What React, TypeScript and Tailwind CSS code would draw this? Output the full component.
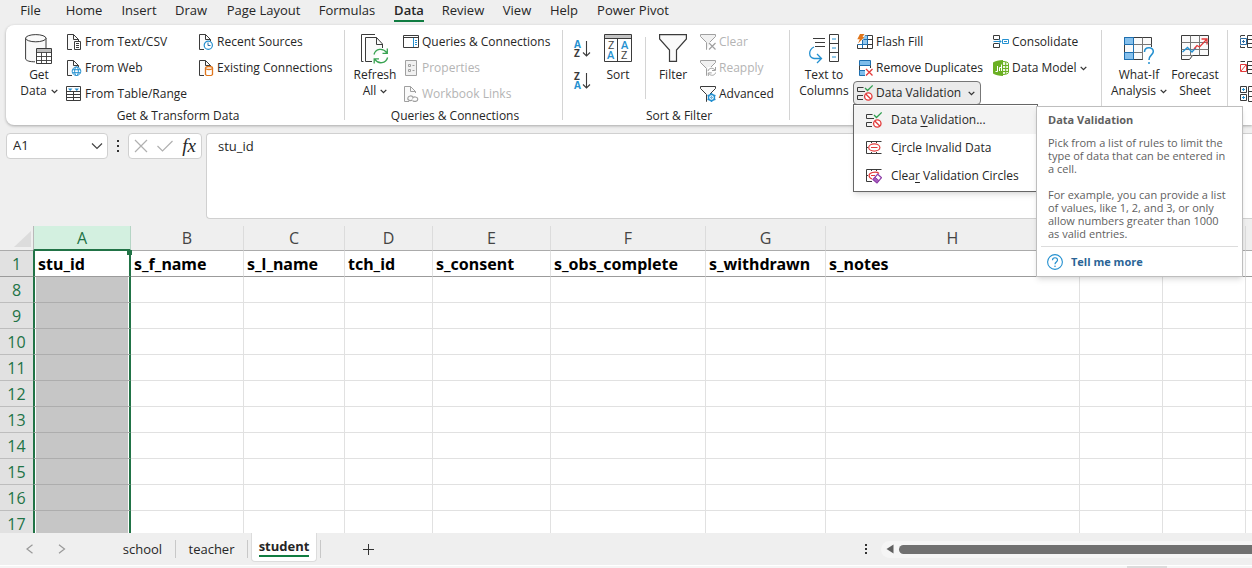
import type { ReactNode } from "react";

const tabs = [
  ["File", "w-[39px]"],
  ["Home", "w-[68px]"],
  ["Insert", "w-[42px]"],
  ["Draw", "w-[62px]"],
  ["Page Layout", "w-[83px]"],
  ["Formulas", "w-[84px]"],
  ["Data", "w-[40px]"],
  ["Review", "w-[68px]"],
  ["View", "w-[40px]"],
  ["Help", "w-[54px]"],
  ["Power Pivot", "w-[84px]"],
];

const columns = [
  ["A", "stu_id", "w-[98px]"],
  ["B", "s_f_name", "w-[113px]"],
  ["C", "s_l_name", "w-[101px]"],
  ["D", "tch_id", "w-[88px]"],
  ["E", "s_consent", "w-[118px]"],
  ["F", "s_obs_complete", "w-[155px]"],
  ["G", "s_withdrawn", "w-[120px]"],
  ["H", "s_notes", "w-[254px]"],
  ["I", "", "w-[83px]"],
  ["J", "", "w-[83px]"],
  ["K", "", "w-[83px]"],
];

const rows = [8, 9, 10, 11, 12, 13, 14, 15, 16, 17];

/* ---------- icons ---------- */

function Svg({ w = 16, h = 16, children }: { w?: number; h?: number; children: ReactNode }) {
  return (
    <svg width={w} height={h} viewBox={`0 0 ${w} ${h}`} fill="none" stroke="#3b3b3b" className="shrink-0" aria-hidden="true">
      {children}
    </svg>
  );
}

function Chevron() {
  return (
    <svg width="7" height="5" viewBox="0 0 7 5" fill="none" stroke="#333" strokeWidth="1.3" className="inline-block shrink-0" aria-hidden="true">
      <path d="M.7 .9L3.5 3.7L6.3 .9" />
    </svg>
  );
}

function Doc({ children, stroke = "#3b3b3b" }: { children: ReactNode; stroke?: string }) {
  return (
    <Svg>
      <path d="M6 15.5H1.5V.5H7.5L12.5 5.5V7" stroke={stroke} fill="#fafafa" />
      <path d="M7.5 .5V5.5H12.5" stroke={stroke} />
      {children}
    </Svg>
  );
}

const TextDocIcon = () => (
  <Doc>
    <path d="M8.5 7.5H14.5V15.5H8.5Z" fill="#fff" />
    <path d="M10 9.5H13M10 11.5H13M10 13.5H13" />
  </Doc>
);

const WebDocIcon = () => (
  <Doc>
    <circle cx="10.5" cy="11.2" r="4.3" stroke="#2490d0" fill="#fff" />
    <ellipse cx="10.5" cy="11.2" rx="1.9" ry="4.3" stroke="#2490d0" />
    <path d="M6.5 9.7H14.5M6.5 12.7H14.5" stroke="#2490d0" />
  </Doc>
);

const RecentIcon = () => (
  <Doc>
    <circle cx="10.3" cy="11.3" r="4.1" stroke="#2490d0" strokeWidth="1.2" fill="#fff" />
    <path d="M10 8.5V11.5H12.5" stroke="#2b6ca3" />
  </Doc>
);

const ConnectionIcon = () => (
  <Doc>
    <path d="M7.5 8V14.5C8.5 16 13.5 16 14.5 14.5V8" stroke="#e0761c" strokeWidth="1.3" fill="#fff" />
    <ellipse cx="11" cy="8" rx="3.5" ry="1.5" stroke="#e0761c" strokeWidth="1.3" fill="#fff" />
  </Doc>
);

const TableIcon = () => (
  <Svg>
    <path d="M.5 .5H14.5V14.5H.5Z" fill="#fff" />
    <path d="M.5 5.5H14.5M.5 8.5H14.5M.5 11.5H14.5M7.5 5V14.5" />
    <path d="M2 2.5H6.5L4.2 5ZM8.5 2.5H13L10.8 5Z" fill="#2490d0" stroke="none" />
  </Svg>
);

const DatabaseIcon = () => (
  <Svg w={28} h={30}>
    <path d="M1 5H20.5V14H10.5V27C5 27.5 1.5 26 1 25Z" fill="#fafafa" stroke="none" />
    <path d="M.6 4V25C1.5 27 5 27.8 10 27.8M21 4V14" />
    <ellipse cx="10.8" cy="4.2" rx="10.2" ry="3.6" fill="#fafafa" />
    <path d="M11.5 14.5H26.5V29.5H11.5Z" fill="#fff" />
    <path d="M12 15H26V18H12Z" fill="#bdbdbd" stroke="none" />
    <path d="M11.5 18.5H26.5M11.5 22.5H26.5M11.5 26.5H26.5M16.5 18.5V29.5M21.5 18.5V29.5" strokeWidth=".9" />
  </Svg>
);

const RefreshIcon = () => (
  <Svg w={28} h={30}>
    <path d="M14 .5H.5V27.5H2.5" />
    <path d="M11 27.5H4.5V3.5H15.5L21.5 10V14" fill="#fafafa" />
    <path d="M15.5 3.5V10.5H21.5" />
    <g stroke="#39a352" strokeWidth="1.3">
      <path d="M13 20.5C14.5 14.5 22 13.5 25.7 18.7M26.3 14.5V19.3H21.5" />
      <path d="M26.6 23.5C25 29.5 17.5 30.6 13.8 25.4M13.2 29.6V24.8H18" />
    </g>
  </Svg>
);

const PaneIcon = () => (
  <Svg>
    <path d="M.5 1.5H15.5V13.5H.5Z" fill="#fff" />
    <path d="M.5 3.5H15.5" />
    <path d="M10.5 4V13" stroke="#2490d0" />
    <path d="M12 6.5H14M12 8.5H14M12 10.5H14" stroke="#2490d0" />
  </Svg>
);

const PropertiesIcon = () => (
  <Svg>
    <path d="M2.5 .5H13.5V15.5H2.5Z" stroke="#a0a0a0" fill="#f1f1f1" />
    <path d="M5.5 4.5H7.5V6.5H5.5ZM5.5 9.5H7.5V11.5H5.5ZM9.5 5.5H11.5M9.5 10.5H11.5" stroke="#a0a0a0" />
  </Svg>
);

const LinksIcon = () => (
  <Doc stroke="#a0a0a0">
    <g stroke="#a0a0a0" strokeWidth="1.2">
      <path d="M9.5 13.7C7.5 15.5 4.2 14.2 4.8 11.9C5.3 9.7 9 9.2 10 11.2" />
      <path d="M9.4 12.4C10.4 10.2 14.6 10.6 14.8 13C14.8 15.8 11 16 9.8 14.6" />
    </g>
  </Doc>
);

function SortIcon({ top, bottom, topColor, bottomColor }: { top: string; bottom: string; topColor: string; bottomColor: string }) {
  return (
    <svg width="18" height="20" viewBox="0 0 18 20" fill="none" className="overflow-visible" aria-hidden="true">
      <g fontFamily="Open Sans, sans-serif" fontSize="10" fontWeight="700">
        <text x="1" y="9" fill={topColor}>{top}</text>
        <text x="1" y="18" fill={bottomColor}>{bottom}</text>
      </g>
      <path d="M13.5 2V17M10 13.5L13.5 17L17 13.5" stroke="#3b3b3b" strokeWidth="1.1" />
    </svg>
  );
}

const SortDialogIcon = () => (
  <Svg w={28} h={30}>
    <path d="M.5 .5H27.5V27.5H.5Z" fill="#fff" />
    <path d="M1 1H27V4H1Z" fill="#c4c4c4" stroke="none" />
    <path d="M.5 4.5H27.5M13.5 4.5V27.5" />
    <g fontFamily="Open Sans, sans-serif" fontSize="11" stroke="none">
      <text x="4" y="15" fill="#444">Z</text>
      <text x="3" y="25" fill="#2490d0" fontWeight="600">A</text>
      <text x="17" y="15" fill="#2490d0" fontWeight="600">A</text>
      <text x="17" y="25" fill="#444">Z</text>
    </g>
  </Svg>
);

const FilterIcon = () => (
  <Svg w={28} h={30}>
    <path d="M.6 .6H27.4V5L17.5 16V27.4H10.5V16L.6 5Z" fill="#fafafa" strokeWidth="1.2" />
  </Svg>
);

function SmallFilter({ stroke = "#a0a0a0", fill = "#f1f1f1", children }: { stroke?: string; fill?: string; children: ReactNode }) {
  return (
    <Svg>
      <path d="M7 15.5H6.5V8.5L.5 2.5V.5H15.5V2.5L10 8" stroke={stroke} fill={fill} />
      {children}
    </Svg>
  );
}

const ClearIcon = () => (
  <SmallFilter>
    <path d="M9 9L15.5 15.5M15.5 9L9 15.5" stroke="#a0a0a0" strokeWidth="1.2" />
  </SmallFilter>
);

const ReapplyIcon = () => (
  <SmallFilter>
    <path d="M7.5 7H16V16H7.5Z" fill="#fff" stroke="none" />
    <path d="M8 11C9 7.5 13 7.5 15 10M15.5 7V10.5H12M15.7 12.5C14.7 16 10.5 16 8.7 13.5M8.3 16.3V12.9H11.7" stroke="#a0a0a0" />
  </SmallFilter>
);

const AdvancedIcon = () => (
  <SmallFilter stroke="#3b3b3b" fill="#fafafa">
    <circle cx="11.5" cy="11.5" r="3" stroke="#2490d0" strokeWidth="1.4" fill="#fff" />
    <circle cx="11.5" cy="11.5" r=".8" stroke="#2490d0" />
    <path d="M11.5 7V8.5M11.5 14.5V16M7.6 9.2L9 10M14 13L15.4 13.8M7.6 13.8L9 13M14 10L15.4 9.2" stroke="#2490d0" strokeWidth="1.6" />
  </SmallFilter>
);

const TextColumnsIcon = () => (
  <Svg w={30} h={30}>
    <path d="M4 4.5H16M6 8.5H16M6 12.5H16" />
    <path d="M20.5 .5H29.5V27.5H20.5ZM20.5 9.5H29.5M20.5 18.5H29.5" fill="#fff" />
    <path d="M23 5H27M23 14H27M23 23H27" stroke="#2490d0" />
    <path d="M5 13C-1 16 -.5 23.5 5 24.5H12.5M8 20L12.5 24.5L8 29" stroke="#2490d0" strokeWidth="1.3" />
  </Svg>
);

const FlashFillIcon = () => (
  <Svg>
    <path d="M8 1.5H15.5V14.5H.5V10.5" fill="#fff" />
    <path d="M10.5 1.5V14.5M5.5 10V14.5M5 10.5H15.5M8 5.5H15.5" />
    <path d="M7.5 1.5H10.5V10.5H5.5V5Z" fill="#93c8ee" stroke="none" />
    <path d="M10.5 1.5V10.5H.5M5.5 14V6M6.5 5.5H10.5" stroke="#1d6fb0" />
    <path d="M3 0H7.5L5.5 3H7.5L1 9.5L2.8 5.2H.3Z" fill="#e0761c" stroke="none" />
  </Svg>
);

const RemoveDuplicatesIcon = () => (
  <Svg>
    <path d="M2.5 .5H13.5V5.5H2.5Z" fill="#7fbdeb" stroke="#1d6fb0" />
    <path d="M2.5 5.5V10.5H8M13.5 5.5V8" stroke="#3b3b3b" />
    <path d="M8 10.5H2.5V15.5H8" fill="#7fbdeb" stroke="#1d6fb0" />
    <path d="M9 9L15.5 15.5M15.5 9L9 15.5" stroke="#e33b3b" strokeWidth="1.3" />
  </Svg>
);

const ValidationIcon = () => (
  <Svg>
    <path d="M6.5 2.5H.5V6.5H8M6 10.5H.5V14.5H6" />
    <path d="M8 3L10.5 5.5L15.7 .5" stroke="#2f9e4f" strokeWidth="1.3" />
    <circle cx="11.3" cy="11.5" r="3.7" stroke="#e33b3b" strokeWidth="1.3" fill="#fff" />
    <path d="M8.8 9L13.8 14" stroke="#e33b3b" strokeWidth="1.3" />
  </Svg>
);

const CircleInvalidIcon = () => (
  <Svg>
    <path d="M15.5 1.5H.5V13.5H15.5M5.5 1.5V3M10.5 1.5V3M5.5 12V13.5M10.5 12V13.5M.5 7.5H2" />
    <ellipse cx="8.3" cy="7.5" rx="5.6" ry="3.6" stroke="#e33b3b" strokeWidth="1.2" fill="#fff" />
    <path d="M5 7.5H11.5" stroke="#e33b3b" />
  </Svg>
);

const ClearCirclesIcon = () => (
  <Svg>
    <path d="M15.5 1.5H.5V13.5H6M5.5 1.5V3M10.5 1.5V3M.5 7.5H2" />
    <path d="M6 11C2 9.5 2 5.5 6.5 4.5C9 4 12 4.5 13 5.5M5 7.5H9" stroke="#e33b3b" strokeWidth="1.2" />
    <path d="M11.7 6.2L15.5 9.7L11 15L7 11.5Z" fill="#fff" stroke="#8f3fa8" strokeWidth="1.2" />
    <path d="M9 9.2L13 12.7L11 15L7 11.5Z" fill="#a55bbd" stroke="#8f3fa8" />
  </Svg>
);

const ConsolidateIcon = () => (
  <Svg>
    <path d="M.5 5V1.5H6.5V5.5H.5M.5 10V13.5H6.5V9.5H.5" />
    <path d="M.5 7.5H8M5.5 5L8 7.5L5.5 10" stroke="#2490d0" />
    <path d="M9.5 5.5H15.5V9.5H9.5ZM11 7.5H14" stroke="#2490d0" />
  </Svg>
);

const DataModelIcon = () => (
  <Svg>
    <path d="M0 2.5C2 1.2 6 .3 10 0V16C6 15.8 2 14.8 0 13.5Z" fill="#6bb023" stroke="none" />
    <path d="M10 1.5C13 1.5 15.5 2.5 15.5 3.5V12.5C15.5 13.5 13 14.5 10 14.5" stroke="#6bb023" fill="#eef7e2" />
    <path d="M12.7 2V14M10 5.5H15M10 8.5H15M10 11.5H15" stroke="#6bb023" />
    <path d="M2.5 11.5H4.5V6M6.5 11V7.5H8.5M8.5 4.5V11" stroke="#fff" />
  </Svg>
);

const WhatIfIcon = () => (
  <Svg w={30} h={30}>
    <path d="M.5 3.5H27.5V25.5H.5Z" fill="#fafafa" />
    <path d="M.5 10.5H27.5M.5 18.5H27.5M18.5 3.5V25.5" stroke="#777" />
    <path d="M.5 3.5H9.5V10.5H.5ZM.5 18.5H9.5V25.5H.5Z" fill="#86c0ec" stroke="#1d6fb0" />
    <path d="M9.5 10.5V18.5" stroke="#1d6fb0" />
    <path d="M19 13H30V30H19Z" fill="#fff" stroke="none" />
    <path d="M20.5 18C20.5 12.5 29.3 12.5 29.3 17.5C29.3 21 25 21 25 26" stroke="#2490d0" strokeWidth="1.5" />
    <circle cx="25" cy="29" r="1" fill="#2490d0" stroke="none" />
  </Svg>
);

const ForecastIcon = () => (
  <Svg w={28} h={30}>
    <path d="M.5 1.5H27.5V21.5H11.5L8.5 25.5H.5Z" fill="#fafafa" />
    <path d="M.5 8.5H27.5M.5 15.5H27.5M9.5 1.5V21.5M18.5 1.5V21.5M.5 21.5H11.5" stroke="#777" />
    <path d="M1.5 18L6.5 13.5L11 18L15 13.5" stroke="#2490d0" strokeWidth="1.4" />
    <path d="M13 15L16 11.5L18.5 13L25.5 5.5M20.5 5H26V10.5" stroke="#e33b3b" strokeWidth="1.3" />
  </Svg>
);

const GroupIcon = () => (
  <Svg>
    <path d="M5 1.5H.5M.5 2V3.5M5 13.5H.5V11.5M7.5 1.5H15.5V13.5H7.5ZM7.5 5.5H15.5M7.5 9.5H15.5" />
    <path d="M.5 4.5H6.5V10.5H.5ZM2 7.5H5M3.5 6V9" stroke="#2b6ca3" />
  </Svg>
);

const UngroupIcon = () => (
  <Svg>
    <path d="M5 1.5H.5M7.5 1.5H15.5V13.5H7.5ZM7.5 5.5H15.5M7.5 9.5H15.5" />
    <path d="M.5 4.5H6.5V11.5H.5ZM1 11L6 5" stroke="#e33b3b" />
  </Svg>
);

const SubtotalIcon = () => (
  <Svg>
    <path d="M.5 .5H6.5V6.5H.5ZM.5 8.5H6.5V14.5H.5ZM8.5 .5H15.5V15.5H8.5ZM8.5 5.5H15.5M8.5 10.5H15.5" />
    <path d="M2 3.5H5M3.5 2V5M2 11.5H5M3.5 10V13" stroke="#2490d0" />
  </Svg>
);

/* ---------- ribbon parts ---------- */

function Group({ label, className, children }: { label?: string; className: string; children: ReactNode }) {
  return (
    <section className={`flex shrink-0 flex-col ${className}`}>
      <div className="flex h-[78px]">{children}</div>
      <div className="pr-1 text-center leading-[18px]">{label}</div>
    </section>
  );
}

const Divider = () => <div className="mt-px mb-[5px] w-px shrink-0 bg-[#d4d4d4]" />;

function BigButton({ icon, top, bottom, menu, className }: { icon: ReactNode; top: string; bottom?: string; menu?: boolean; className: string }) {
  return (
    <button className={`flex shrink-0 flex-col items-center pt-[5px] leading-4 whitespace-nowrap ${className}`}>
      {icon}
      <span className="mt-[3px]">{top}</span>
      {bottom && (
        <span className="flex items-center gap-1">
          {bottom}
          {menu && <Chevron />}
        </span>
      )}
    </button>
  );
}

function SmallButton({ icon, label, menu, disabled }: { icon: ReactNode; label: string; menu?: boolean; disabled?: boolean }) {
  return (
    <button disabled={disabled} className="flex h-[26px] items-center gap-[3px] whitespace-nowrap disabled:text-[#b4b4b4]">
      {icon}
      <span>{label}</span>
      {menu && <Chevron />}
    </button>
  );
}

function MenuItem({ icon, before, hot, after, active }: { icon: ReactNode; before: string; hot: string; after: string; active?: boolean }) {
  return (
    <button role="menuitem" className={`flex h-7 w-full items-center gap-[9px] pl-3 whitespace-nowrap ${active ? "bg-[#f3f3f3]" : ""}`}>
      {icon}
      <span>
        {before}
        <span className="underline underline-offset-2">{hot}</span>
        {after}
      </span>
    </button>
  );
}

function ValidationMenu() {
  return (
    <div role="menu" className="absolute top-[23px] left-0 z-10 w-[185px] border border-[#666] bg-white py-px shadow-md">
      <MenuItem icon={<ValidationIcon />} before="Data " hot="V" after="alidation..." active />
      <MenuItem icon={<CircleInvalidIcon />} before="C" hot="i" after="rcle Invalid Data" />
      <MenuItem icon={<ClearCirclesIcon />} before="Clea" hot="r" after=" Validation Circles" />
    </div>
  );
}

function ValidationTooltip() {
  return (
    <div role="tooltip" className="absolute top-[25px] left-[183px] z-20 w-[207px] border border-[#bebebe] bg-white px-1 pt-1.5 text-[11px] leading-[13px] text-[#5f5f5f] shadow-md">
      <div className="px-[7px]">
        <h2 className="font-bold leading-[14px]">Data Validation</h2>
        <p className="mt-[9px]">Pick from a list of rules to limit the type of data that can be entered in a cell.</p>
        <p className="mt-[13px]">For example, you can provide a list of values, like 1, 2, and 3, or only allow numbers greater than 1000 as valid entries.</p>
      </div>
      <a href="#help" className="mt-[6px] flex h-[30px] items-center gap-2 border-t border-[#dcdcdc] pl-[6px] font-bold text-[#2a6496]">
        <svg width="16" height="16" viewBox="0 0 16 16" fill="none" stroke="#2490d0" aria-hidden="true">
          <circle cx="8" cy="8" r="7.4" strokeWidth="1.1" />
          <path d="M5.5 6.2C5.5 3 10.5 3 10.5 6C10.5 8 8 8 8 10.3" strokeWidth="1.2" />
          <circle cx="8" cy="12.3" r=".8" fill="#2490d0" stroke="none" />
        </svg>
        Tell me more
      </a>
    </div>
  );
}

function Ribbon() {
  return (
    <div className="ml-1.5 flex h-[100px] shrink-0 rounded-l-lg bg-white pt-1 pl-px shadow-[0_1px_3px_rgba(0,0,0,0.3)]">
      <Group label="Get & Transform Data" className="w-[337px] pl-[9px]">
        <BigButton icon={<DatabaseIcon />} top="Get" bottom="Data" menu className="w-[46px]" />
        <div className="ml-1 w-[132px]">
          <SmallButton icon={<TextDocIcon />} label="From Text/CSV" />
          <SmallButton icon={<WebDocIcon />} label="From Web" />
          <SmallButton icon={<TableIcon />} label="From Table/Range" />
        </div>
        <div>
          <SmallButton icon={<RecentIcon />} label="Recent Sources" />
          <SmallButton icon={<ConnectionIcon />} label="Existing Connections" />
        </div>
      </Group>
      <Divider />
      <Group label="Queries & Connections" className="w-[217px] pl-[7px]">
        <BigButton icon={<RefreshIcon />} top="Refresh" bottom="All" menu className="w-[46px]" />
        <div className="ml-[5px]">
          <SmallButton icon={<PaneIcon />} label="Queries & Connections" />
          <SmallButton icon={<PropertiesIcon />} label="Properties" disabled />
          <SmallButton icon={<LinksIcon />} label="Workbook Links" disabled />
        </div>
      </Group>
      <Divider />
      <Group label="Sort & Filter" className="w-[226px] pl-[10px]">
        <div className="flex w-5 flex-col gap-3 pt-[10px]">
          <button aria-label="Sort A to Z">
            <SortIcon top="A" bottom="Z" topColor="#2490d0" bottomColor="#3b3b3b" />
          </button>
          <button aria-label="Sort Z to A">
            <SortIcon top="Z" bottom="A" topColor="#3b3b3b" bottomColor="#2490d0" />
          </button>
        </div>
        <BigButton icon={<SortDialogIcon />} top="Sort" className="ml-1 w-[42px]" />
        <div className="mx-1.5 my-2 w-px bg-[#d4d4d4]" />
        <BigButton icon={<FilterIcon />} top="Filter" className="w-[42px]" />
        <div className="ml-1.5">
          <SmallButton icon={<ClearIcon />} label="Clear" disabled />
          <SmallButton icon={<ReapplyIcon />} label="Reapply" disabled />
          <SmallButton icon={<AdvancedIcon />} label="Advanced" />
        </div>
      </Group>
      <Divider />
      <Group className="w-[311px] pl-2">
        <BigButton icon={<TextColumnsIcon />} top="Text to" bottom="Columns" className="w-[52px]" />
        <div className="ml-[3px] w-32">
          <div className="pl-1">
            <SmallButton icon={<FlashFillIcon />} label="Flash Fill" />
            <SmallButton icon={<RemoveDuplicatesIcon />} label="Remove Duplicates" />
          </div>
          <div className="relative">
            <button aria-haspopup="menu" aria-expanded="true" className="flex h-6 w-full items-center gap-[3px] rounded border border-[#777] bg-[#ebebeb] pr-[5px] pl-[3px] whitespace-nowrap">
              <ValidationIcon />
              <span className="flex-1 text-left">Data Validation</span>
              <Chevron />
            </button>
            <ValidationMenu />
            <ValidationTooltip />
          </div>
        </div>
        <div className="ml-3">
          <SmallButton icon={<ConsolidateIcon />} label="Consolidate" />
          <SmallButton icon={<DataModelIcon />} label="Data Model" menu />
        </div>
      </Group>
      <Divider />
      <Group className="w-[125px] pl-[10px]">
        <BigButton icon={<WhatIfIcon />} top="What-If" bottom="Analysis" menu className="w-[54px]" />
        <BigButton icon={<ForecastIcon />} top="Forecast" bottom="Sheet" className="ml-1.5 w-[46px]" />
      </Group>
      <Divider />
      <Group className="pl-3">
        <div className="flex flex-col">
          <button aria-label="Group" className="flex h-[26px] items-center"><GroupIcon /></button>
          <button aria-label="Ungroup" className="flex h-[26px] items-center"><UngroupIcon /></button>
          <button aria-label="Subtotal" className="flex h-[26px] items-center"><SubtotalIcon /></button>
        </div>
      </Group>
    </div>
  );
}

/* ---------- formula bar, grid, sheet tabs ---------- */

function FormulaBar() {
  return (
    <div className="flex shrink-0 items-start pt-2 pb-[7px] pl-1.5">
      <div className="flex h-[26px] w-[102px] items-center rounded border border-[#d0d0d0] bg-white pr-1 pl-1.5">
        <input aria-label="Name box" defaultValue="A1" className="w-full min-w-0 text-[13px] outline-none" />
        <svg width="12" height="8" viewBox="0 0 12 8" fill="none" stroke="#444" strokeWidth="1.2" className="shrink-0" aria-hidden="true">
          <path d="M1 1.5L6 6.5L11 1.5" />
        </svg>
      </div>
      <svg width="20" height="26" viewBox="0 0 20 26" fill="#333" aria-hidden="true">
        <path d="M9 7h2v2H9zM9 12h2v2H9zM9 17h2v2H9z" />
      </svg>
      <div className="flex h-[26px] w-[74px] items-center justify-between rounded border border-[#d0d0d0] bg-white px-[5px]">
        <button aria-label="Cancel">
          <svg width="14" height="14" viewBox="0 0 14 14" fill="none" stroke="#b0b0b0" strokeWidth="1.2">
            <path d="M1 1L13 13M13 1L1 13" />
          </svg>
        </button>
        <button aria-label="Enter">
          <svg width="16" height="12" viewBox="0 0 16 12" fill="none" stroke="#b0b0b0" strokeWidth="1.2">
            <path d="M.5 6L5.5 11L15.5 1" />
          </svg>
        </button>
        <button className="font-['Liberation_Serif',serif] text-[19px] leading-5 italic">fx</button>
      </div>
      <textarea
        aria-label="Formula"
        defaultValue="stu_id"
        className="ml-1 h-[86px] flex-1 resize-none rounded-l border border-r-0 border-[#d0d0d0] bg-white px-[11px] pt-1 text-[13px] leading-4 outline-none"
      />
    </div>
  );
}

function Grid() {
  return (
    <div className="min-h-0 flex-1 overflow-hidden bg-white">
      <table className="w-full table-fixed border-separate border-spacing-0">
        <colgroup>
          <col className="w-[33px]" />
          {columns.map(([letter, , width]) => (
            <col key={letter} className={width} />
          ))}
        </colgroup>
        <thead>
          <tr className="h-[25px] bg-[#efefef] text-base leading-5 text-[#444]">
            <td className="border-b border-[#ababab] p-0">
              <svg width="33" height="24" viewBox="0 0 33 24" className="block" aria-hidden="true">
                <path d="M31 5V21H14Z" fill="#dcdcdc" />
              </svg>
            </td>
            {columns.map(([letter]) => (
              <th
                key={letter}
                scope="col"
                className={
                  letter === "A"
                    ? "border-r border-b-2 border-l border-r-[#b5d5c5] border-b-[#217346] border-l-[#b9b9b9] bg-[#d3f0e0] p-0 font-normal text-[#217346]"
                    : "border-r border-b border-r-[#dcdcdc] border-b-[#ababab] p-0 font-normal"
                }
              >
                {letter}
              </th>
            ))}
          </tr>
        </thead>
        <tbody className="text-base leading-5">
          <tr className="h-[26px]">
            <th scope="row" className="border-b border-[#9b9b9b] bg-[#e1e1e1] p-0 font-normal text-[#217346]">1</th>
            {columns.map(([letter, name]) => (
              <td
                key={letter}
                className={
                  letter === "A"
                    ? "relative border-x-2 border-b border-x-[#217346] border-b-[#9b9b9b] px-[3px] py-0 font-['Noto_Sans',sans-serif] font-bold whitespace-nowrap text-black"
                    : "border-r border-b border-r-[#e1e1e1] border-b-[#9b9b9b] px-[3px] py-0 font-['Noto_Sans',sans-serif] font-bold whitespace-nowrap text-black"
                }
              >
                {name}
                {letter === "A" && <span className="absolute -top-px -right-[3px] size-[5px] bg-[#217346]" />}
              </td>
            ))}
          </tr>
          {rows.map((row) => (
            <tr key={row} className="h-[26px]">
              <th scope="row" className="border-b border-[#bdbdbd] bg-[#e1e1e1] p-0 font-normal text-[#217346]">{row}</th>
              {columns.map(([letter]) => (
                <td
                  key={letter}
                  className={
                    letter === "A"
                      ? "border-x-2 border-b border-x-[#217346] border-b-[#adadad] bg-[#c6c6c6] p-0 shadow-[inset_1px_0_#fff,inset_-1px_0_#fff]"
                      : "border-r border-b border-[#e1e1e1] p-0"
                  }
                />
              ))}
            </tr>
          ))}
        </tbody>
      </table>
    </div>
  );
}

function SheetBar() {
  return (
    <div className="flex h-8 shrink-0 items-center text-[13px]">
      <div className="flex w-[110px] items-center gap-6 pl-[26px]">
        <button aria-label="Previous sheet">
          <svg width="8" height="10" viewBox="0 0 8 10" fill="none" stroke="#999" strokeWidth="1.2"><path d="M6.5 .8L1 5L6.5 9.2" /></svg>
        </button>
        <button aria-label="Next sheet">
          <svg width="8" height="10" viewBox="0 0 8 10" fill="none" stroke="#999" strokeWidth="1.2"><path d="M1 .8L6.5 5L1 9.2" /></svg>
        </button>
      </div>
      <button className="h-[18px] w-[66px] border-r border-[#c8c8c8]">school</button>
      <button className="h-[18px] w-[72px] border-r border-[#c8c8c8]">teacher</button>
      <button className="ml-[3px] flex h-[29px] w-[66px] flex-col items-center self-start rounded-b border border-t-0 border-[#dcdcdc] bg-white pt-1 font-bold">
        <span className="border-b-2 border-[#107c41] leading-[18px]">student</span>
      </button>
      <div className="ml-[3px] h-[18px] w-px bg-[#c8c8c8]" />
      <button aria-label="New sheet" className="ml-[42px]">
        <svg width="11" height="11" viewBox="0 0 11 11" stroke="#333"><path d="M5.5 0V11M0 5.5H11" /></svg>
      </button>
      <div className="ml-auto flex w-[387px] items-center">
        <svg width="3" height="12" viewBox="0 0 3 12" fill="#333" aria-hidden="true">
          <path d="M0 1h2v2H0zM0 5h2v2H0zM0 9h2v2H0z" />
        </svg>
        <div className="ml-[13px] flex h-[17px] flex-1 items-center gap-[5px] rounded-l-full bg-[#f5f5f5] pl-[5px]">
          <svg width="8" height="10" viewBox="0 0 8 10" fill="#606060" aria-hidden="true"><path d="M7.5 .5V9.5L.5 5Z" /></svg>
          <div className="h-[9px] flex-1 rounded-l-full bg-[#707070]" />
        </div>
      </div>
    </div>
  );
}

export default function App() {
  return (
    <div className="flex h-screen flex-col overflow-hidden bg-[#efefef] font-['Open_Sans','Noto_Sans',sans-serif] text-[12px] text-[#262626]">
      <nav className="flex h-[25px] shrink-0 pl-[11px] text-[13px]">
        {tabs.map(([name, width]) => (
          <button key={name} className={`flex shrink-0 justify-center whitespace-nowrap ${width}`}>
            <span className={name === "Data" ? "h-[22px] border-b-2 border-[#107c41] leading-5 font-semibold" : "h-[22px] leading-5"}>{name}</span>
          </button>
        ))}
      </nav>
      <Ribbon />
      <FormulaBar />
      <Grid />
      <SheetBar />
      <footer className="h-[3px] shrink-0 border-t border-white bg-[#f5f5f5] pl-[90%]">
        <div className="h-0.5 w-10 bg-[#dcdcdc]" />
      </footer>
    </div>
  );
}
